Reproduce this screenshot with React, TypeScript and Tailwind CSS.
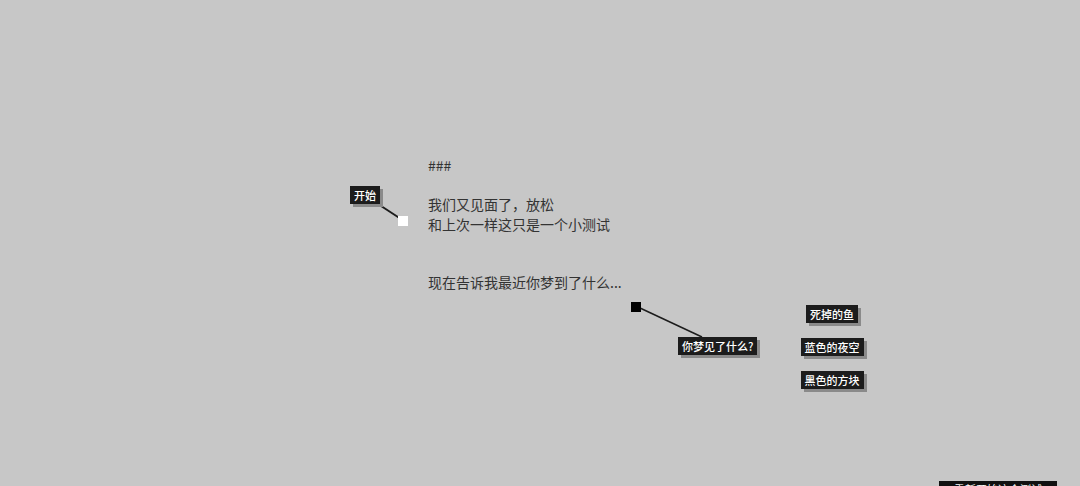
const FONT = "font-['Noto_Sans_CJK_SC','Noto_Sans',sans-serif]"

const Label = ({ text, className = '' }: { text: string; className?: string }) => (
  <div
    className={`flex h-[18px] items-center justify-center whitespace-nowrap bg-[#1c1c1c] px-[4px] text-[11px] leading-none font-medium text-white shadow-[3px_3px_0_#8a8a8a] ${className}`}
  >
    {text}
  </div>
)

const lines = [
  '###',
  '',
  '我们又见面了，放松',
  '和上次一样这只是一个小测试',
  '',
  '',
  '现在告诉我最近你梦到了什么...',
]

const options = ['死掉的鱼', '蓝色的夜空', '黑色的方块']

export default function App() {
  return (
    <div className={`relative h-[486px] w-[1080px] overflow-hidden bg-[#c7c7c7] ${FONT}`}>
      <div className="pt-[156px] pl-[428px] text-[14px] leading-[19.5px] text-[#333333]">
        {lines.map((line, i) => (
          <div key={i} className="h-[19.5px]">{line}</div>
        ))}
      </div>

      <svg className="absolute top-0 left-0" width="1080" height="486">
        <line x1="378" y1="204" x2="401" y2="219" stroke="#1c1c1c" strokeWidth="2" />
        <line x1="640" y1="308" x2="702" y2="337" stroke="#1c1c1c" strokeWidth="1.5" />
      </svg>

      {/* start node */}
      <Label text="开始" className="absolute top-[186px] left-[350px]" />
      <div className="absolute top-[216px] left-[398px] h-[10px] w-[10px] bg-white" />

      {/* question node */}
      <div className="absolute top-[302px] left-[631px] h-[10px] w-[10px] bg-black" />
      <Label text="你梦见了什么?" className="absolute top-[337px] left-[678px]" />

      {/* answers */}
      <div className="absolute top-[305px] left-[772px] flex w-[120px] flex-col items-center gap-[15px]">
        {options.map(option => (
          <Label key={option} text={option} />
        ))}
      </div>

      <div className="absolute top-[481px] left-[939px] flex h-[20px] w-[118px] items-start justify-center bg-[#111111] pt-[3px] text-[11px] leading-none text-white">
        重新开始这个测试
      </div>
    </div>
  )
}
